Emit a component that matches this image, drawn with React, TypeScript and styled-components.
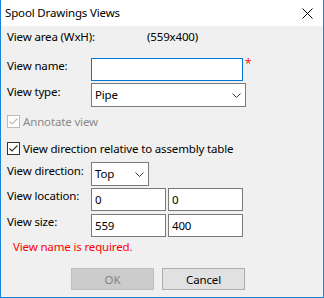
import React from 'react';
import styled, { createGlobalStyle } from 'styled-components';

const GlobalStyle = createGlobalStyle`
  html, body {
    margin: 0;
    padding: 0;
    background: #ffffff;
  }
  body {
    font-family: "Noto Sans", "Open Sans", sans-serif;
    font-size: 11.5px;
    letter-spacing: -0.15px;
    color: #000000;
  }
`;

const Window = styled.div`
  width: 324px;
  height: 298px;
  box-sizing: border-box;
  border: 1px solid #1883d7;
  border-top: none;
  background: #f0f0f0;
  display: flex;
  flex-direction: column;
`;

const TitleBar = styled.div`
  height: 26px;
  background: #ffffff;
  display: flex;
  align-items: center;
  justify-content: space-between;
  padding: 0 10px 0 4px;
  line-height: 16px;
`;

const Title = styled.span`
  font-size: 11.5px;
`;

const Body = styled.div`
  display: flex;
  flex-direction: column;
  padding-left: 6px;
`;

const Row = styled.div<{ $top: number }>`
  display: grid;
  grid-template-columns: 84px auto;
  align-items: start;
  margin-top: ${p => p.$top}px;
  line-height: 16px;
`;

const Label = styled.span<{ $drop?: number }>`
  padding-top: ${p => p.$drop || 0}px;
  white-space: nowrap;
`;

const Value = styled.span`
  padding-left: 56px;
`;

const Controls = styled.div`
  display: flex;
  align-items: flex-start;
  gap: 2px;
`;

const TextBox = styled.div<{ $w: number; $focused?: boolean }>`
  width: ${p => p.$w}px;
  height: 23px;
  box-sizing: border-box;
  background: #ffffff;
  border: 1px solid ${p => (p.$focused ? '#0078d7' : '#7a7a7a')};
  padding: 2px 3px 0;
  line-height: 17px;
`;

const Required = styled.span`
  color: #ff2020;
  font-size: 12px;
  line-height: 12px;
`;

const Select = styled.div<{ $w: number }>`
  width: ${p => p.$w}px;
  height: 24px;
  box-sizing: border-box;
  background: #ffffff;
  border: 1px solid #7a7a7a;
  display: flex;
  align-items: center;
  justify-content: space-between;
  padding: 0 4px 0 3px;
`;

const CheckRow = styled.label<{ $top: number; $disabled?: boolean }>`
  display: flex;
  align-items: center;
  gap: 3px;
  height: 16px;
  margin-top: ${p => p.$top}px;
  color: ${p => (p.$disabled ? '#8a8a8a' : '#000000')};
  white-space: nowrap;
`;

const Box = styled.span<{ $disabled?: boolean }>`
  width: 13px;
  height: 13px;
  box-sizing: border-box;
  border: 1px solid ${p => (p.$disabled ? '#bcbcbc' : '#333333')};
  background: #ffffff;
  display: flex;
`;

const ErrorText = styled.div`
  color: #ff0000;
  margin: 2px 0 0 6px;
  line-height: 16px;
`;

const Buttons = styled.div`
  display: flex;
  gap: 8px;
  margin: 13px 0 0 64px;
`;

const Button = styled.div<{ $disabled?: boolean }>`
  width: 83px;
  height: 22px;
  box-sizing: border-box;
  display: flex;
  align-items: center;
  justify-content: center;
  background: ${p => (p.$disabled ? '#cccccc' : '#e1e1e1')};
  border: 1px solid ${p => (p.$disabled ? '#bfbfbf' : '#adadad')};
  color: ${p => (p.$disabled ? '#838383' : '#000000')};
`;

const Chevron = () => (
  <svg width="9" height="5" viewBox="0 0 9 5">
    <polyline points="0.5,0.5 4.5,4.5 8.5,0.5" fill="none" stroke="#333333" strokeWidth="1" />
  </svg>
);

const Check = ({ color }: { color: string }) => (
  <svg width="11" height="11" viewBox="0 0 11 11">
    <polyline points="1.5,5.5 4,8 9.5,2.5" fill="none" stroke={color} strokeWidth="1.2" />
  </svg>
);

const CloseIcon = () => (
  <svg width="11" height="11" viewBox="0 0 11 11">
    <line x1="0.5" y1="0.5" x2="10.5" y2="10.5" stroke="#000" strokeWidth="1" />
    <line x1="10.5" y1="0.5" x2="0.5" y2="10.5" stroke="#000" strokeWidth="1" />
  </svg>
);

export default function App() {
  return (
    <>
      <GlobalStyle />
      <Window>
        <TitleBar>
          <Title>Spool Drawings Views</Title>
          <CloseIcon />
        </TitleBar>
        <Body>
          <Row $top={3}>
            <Label>View area (WxH):</Label>
            <Value>(559x400)</Value>
          </Row>
          <Row $top={13}>
            <Label>View name:</Label>
            <Controls>
              <TextBox $w={152} $focused />
              <Required>*</Required>
            </Controls>
          </Row>
          <Row $top={2}>
            <Label $drop={1}>View type:</Label>
            <Select $w={155}>
              <span>Pipe</span>
              <Chevron />
            </Select>
          </Row>
          <CheckRow $top={6} $disabled>
            <Box $disabled>
              <Check color="#bcbcbc" />
            </Box>
            Annotate view
          </CheckRow>
          <CheckRow $top={11}>
            <Box>
              <Check color="#333333" />
            </Box>
            View direction relative to assembly table
          </CheckRow>
          <Row $top={6}>
            <Label $drop={1}>View direction:</Label>
            <Select $w={58}>
              <span>Top</span>
              <Chevron />
            </Select>
          </Row>
          <Row $top={2}>
            <Label>View location:</Label>
            <Controls>
              <TextBox $w={75}>0</TextBox>
              <TextBox $w={75}>0</TextBox>
            </Controls>
          </Row>
          <Row $top={3}>
            <Label>View size:</Label>
            <Controls>
              <TextBox $w={75}>559</TextBox>
              <TextBox $w={75}>400</TextBox>
            </Controls>
          </Row>
          <ErrorText>View name is required.</ErrorText>
          <Buttons>
            <Button $disabled>OK</Button>
            <Button>Cancel</Button>
          </Buttons>
        </Body>
      </Window>
    </>
  );
}
